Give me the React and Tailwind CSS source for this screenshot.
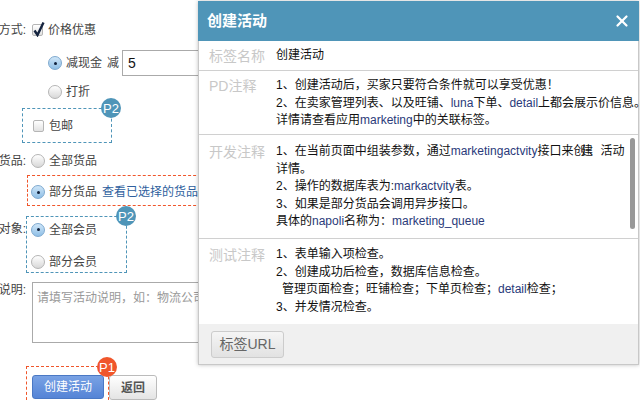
import React from "react";
import { X } from "lucide-react";

const font = "font-['Liberation_Sans','Noto_Sans_CJK_SC',sans-serif]";

function Radio({ on }) {
  return (
    <span
      className={
        "flex h-[14px] w-[14px] shrink-0 items-center justify-center rounded-full border " +
        (on
          ? "border-[#7ea9cf] bg-gradient-to-b from-[#cfe6f8] to-[#8fbfe6]"
          : "border-[#b5b5b5] bg-gradient-to-b from-white to-[#d8d8d8]")
      }
    >
      {on && <span className="h-[3px] w-[3px] rounded-full bg-[#10203a]" />}
    </span>
  );
}

function Check({ on }) {
  return (
    <span className="relative block h-[12px] w-[11px] shrink-0 rounded-[2px] border border-[#b5b5b5] bg-gradient-to-b from-white to-[#e2e2e2]">
      {on && (
        <svg viewBox="0 0 14 16" className="absolute -top-[4px] -left-[1px] h-[16px] w-[14px]">
          <path d="M2.5 9.5 L5.5 14 L11.5 1.5" fill="none" stroke="#14233f" strokeWidth="2.4" />
        </svg>
      )}
    </span>
  );
}

function Badge({ color, children, cls }) {
  return (
    <span
      className={
        "absolute flex h-5 w-5 items-center justify-center rounded-full text-[13px] leading-none text-white " +
        color +
        " " +
        cls
      }
    >
      {children}
    </span>
  );
}

function Label({ children, h = "h-6" }) {
  return (
    <div className={"flex w-[26px] shrink-0 items-center justify-end overflow-hidden whitespace-nowrap text-[#444] " + h}>
      {children}
    </div>
  );
}

function Note({ title, className, children }) {
  return (
    <div className={"flex border-b border-[#d0d0d0] pl-[10px] " + className}>
      <div className="w-[67px] shrink-0 text-[14px] leading-[18px] text-[#c8c8c8]">{title}</div>
      <div className="min-w-0 flex-1 pr-[6px] text-[12px] leading-[17.5px] whitespace-nowrap text-[#111]">{children}</div>
    </div>
  );
}

const L = ({ children }) => <span className="text-[#2a3a7a]">{children}</span>;

export default function App() {
  return (
    <div className={"relative h-[400px] w-[640px] overflow-hidden bg-white text-[12px] " + font}>
      <div className="flex h-[18px]" />
      <div className="flex h-6 items-center">
        <Label>优惠方式:</Label>
        <div className="ml-[6px] flex items-center gap-[5px] text-[#444]">
          <Check on />
          <span>价格优惠</span>
        </div>
      </div>
      <div className="mt-2 flex h-[26px] items-center pl-[48px] text-[#444]">
        <Radio on />
        <span className="ml-[4px]">减现金</span>
        <span className="ml-[5px]">减</span>
        <div className="ml-[3px] flex h-[26px] w-[200px] shrink-0 items-center border border-[#aaa] pl-[5px] text-[14px] text-[#111]">
          5
        </div>
      </div>
      <div className="mt-1 flex h-6 items-center pl-[48px] text-[#444]">
        <Radio />
        <span className="ml-[4px]">打折</span>
      </div>
      <div className="relative mt-1 ml-[22px] flex h-[35px] w-[90px] items-center gap-[5px] border border-dashed border-[#4f95b8] pl-[10px] text-[#444]">
        <Check />
        <span>包邮</span>
        <Badge color="bg-[#4f95b8]" cls="-top-[11px] -right-[10px]">P2</Badge>
      </div>
      <div className="mt-[6px] flex h-6 items-center">
        <Label>活动货品:</Label>
        <div className="ml-[5px] flex items-center gap-[4px] text-[#444]">
          <Radio />
          <span>全部货品</span>
        </div>
      </div>
      <div className="mt-[2px] ml-[27px] flex h-[31px] w-[300px] items-center border border-dashed border-[#f0562b] pt-[3px] pl-[3px] text-[#444]">
        <Radio on />
        <span className="ml-[4px]">部分货品</span>
        <span className="ml-[5px] whitespace-nowrap text-[#2f5f9e]">查看已选择的货品(0)</span>
      </div>
      <div className="mt-[10px] flex">
        <div className="mt-[1px]">
          <Label>活动对象:</Label>
        </div>
        <div className="relative flex h-[57px] w-[101px] flex-col justify-between border border-dashed border-[#4f95b8] pl-[4px] text-[#444]">
          <div className="flex h-6 items-center gap-[4px] pt-[1px]">
            <Radio on />
            <span>全部会员</span>
          </div>
          <div className="flex h-5 items-center gap-[4px]">
            <Radio />
            <span>部分会员</span>
          </div>
          <Badge color="bg-[#4f95b8]" cls="-top-[11px] -right-[10px]">P2</Badge>
        </div>
      </div>
      <div className="mt-[9px] flex">
        <Label h="h-4">活动说明:</Label>
        <div className="ml-[6px] h-[61px] w-[300px] shrink-0 border border-[#aaa] pt-[6px] pl-[4px] text-[12px] leading-[18px] whitespace-nowrap text-[#999]">
          请填写活动说明&#xFF0C;如&#xFF1A;物流公司
        </div>
      </div>
      <div className="relative mt-[23px] ml-[26px] flex h-[60px] w-[83px] gap-[5px] border border-dashed border-b-0 border-[#f0562b] pt-[8px] pl-[5px]">
        <div className="flex h-6 w-[72px] shrink-0 items-center justify-center rounded-[3px] border border-[#4a78c4] bg-gradient-to-b from-[#79a2e4] to-[#5584d6] text-white">
          创建活动
        </div>
        <div className="flex h-[25px] w-[48px] shrink-0 items-center justify-center rounded-[3px] border border-[#bbb] bg-gradient-to-b from-white to-[#e4e4e4] font-bold text-[#555]">
          返回
        </div>
        <Badge color="bg-[#f0562b]" cls="-top-[10px] -right-[9px]">P1</Badge>
      </div>

      <div className="absolute top-[1px] left-[198px] w-[441px] border border-t-0 border-[#c8c8c8] bg-white shadow-[0_0_4px_rgba(0,0,0,0.25)]">
        <div className="-mx-px flex h-[40px] items-center justify-between bg-[#4f95b8] pr-[8px] pl-[9px] text-white">
          <span className="text-[15px] font-bold">创建活动</span>
          <X size={18} strokeWidth={3} />
        </div>
        <Note title="标签名称" className="h-[30px] items-center">
          <span className="text-[#111]">创建活动</span>
        </Note>
        <Note title="PD注释" className="h-[64px] pt-[6px]">
          <div>1、创建活动后&#xFF0C;买家只要符合条件就可以享受优惠&#xFF01;</div>
          <div>2、在卖家管理列表、以及旺铺、<L>luna</L>下单、<L>detail</L>上都会展示价信息。</div>
          <div>详情请查看应用<L>marketing</L>中的关联标签。</div>
        </Note>
        <Note title="开发注释" className="relative h-[104px] pt-[8px]">
          <div>1、在当前页面中组装参数&#xFF0C;通过<L>marketingactvity</L>接口来<span className="tracking-[-4.5px]">创建</span>、活动</div>
          <div>详情。</div>
          <div>2、操作的数据库表为:<L>markactvity</L>表。</div>
          <div>3、如果是部分货品会调用异步接口。</div>
          <div>具体的<L>napoli</L>名称为&#xFF1A;<L>marketing_queue</L></div>
          <span className="absolute top-[3px] right-[3px] h-[91px] w-[5px] rounded-[3px] bg-[#999]" />
        </Note>
        <div className="flex h-[85px] pt-[7px] pl-[10px]">
          <div className="w-[67px] shrink-0 text-[14px] leading-[18px] text-[#c8c8c8]">测试注释</div>
          <div className="text-[12px] leading-[17.5px] text-[#111]">
            <div>1、表单输入项检查。</div>
            <div>2、创建成功后检查&#xFF0C;数据库信息检查。</div>
            <div className="pl-[6px]">管理页面检查&#xFF1B;旺铺检查&#xFF1B;下单页检查&#xFF1B;<L>detail</L>检查&#xFF1B;</div>
            <div>3、并发情况检查。</div>
          </div>
        </div>
        <div className="flex h-[40px] items-center bg-[#f0f0f0] pl-[12px]">
          <div className="flex h-[27px] w-[73px] items-center justify-center rounded-[3px] border border-[#ccc] bg-gradient-to-b from-[#f5f5f5] to-[#e2e2e2] text-[14px] text-[#666]">
            标签URL
          </div>
        </div>
      </div>
    </div>
  );
}
